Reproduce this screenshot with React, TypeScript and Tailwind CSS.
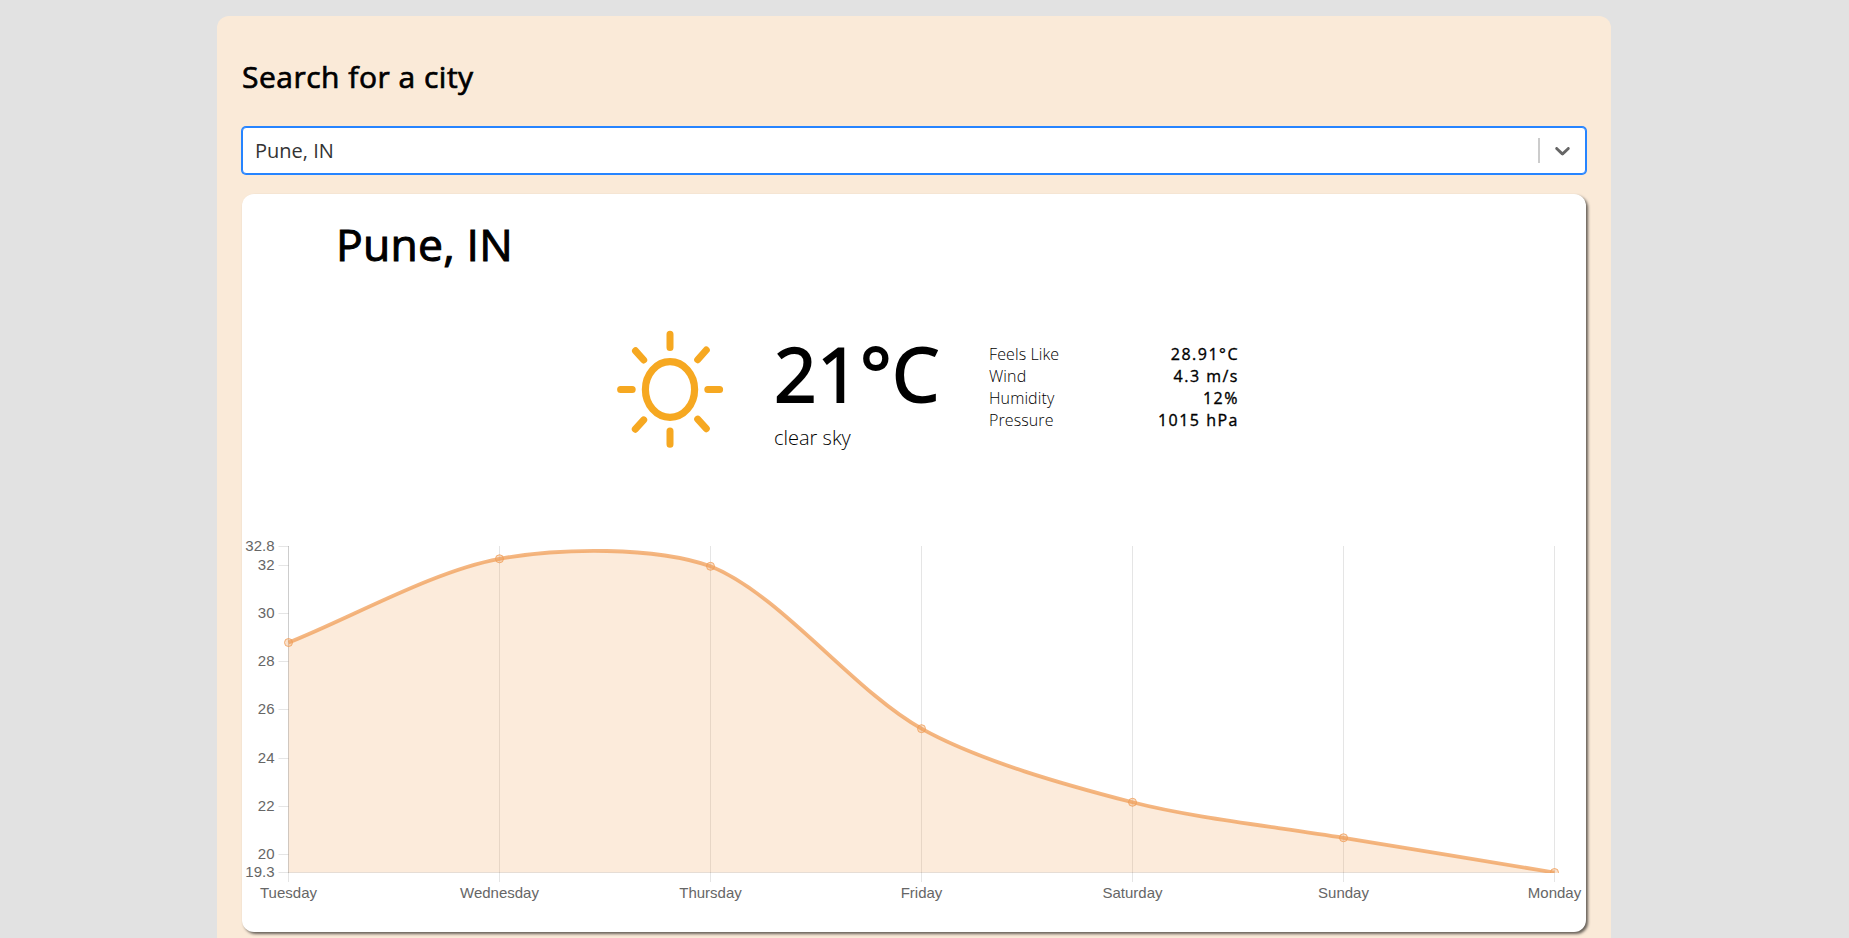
import React from 'react';

type Point = { x: number; y: number };

const AREA = { left: 46.5, right: 1312.5, top: 28.5, bottom: 354.5 };
const DAYS = ['Tuesday', 'Wednesday', 'Thursday', 'Friday', 'Saturday', 'Sunday', 'Monday'];
const TEMPS = [28.79, 32.26, 31.95, 25.22, 22.17, 20.7, 19.26];
const TICKS = [
  { label: '32.8', value: 32.77 },
  { label: '32', value: 32 },
  { label: '30', value: 30 },
  { label: '28', value: 28 },
  { label: '26', value: 26 },
  { label: '24', value: 24 },
  { label: '22', value: 22 },
  { label: '20', value: 20 },
  { label: '19.3', value: 19.26 },
];
const STATS = [
  ['Feels Like', '28.91°C'],
  ['Wind', '4.3 m/s'],
  ['Humidity', '12%'],
  ['Pressure', '1015 hPa'],
];
const TENSION = 0.3;

const xAt = (i: number) => AREA.left + ((AREA.right - AREA.left) * i) / (DAYS.length - 1);
const yAt = (v: number) => AREA.top + ((32.77 - v) / (32.77 - 19.26)) * (AREA.bottom - AREA.top);
const clampY = (y: number) => Math.min(AREA.bottom, Math.max(AREA.top, y));
const crisp = (v: number) => Math.floor(v) + 0.5;

function controls(prev: Point, cur: Point, next: Point) {
  const a = Math.hypot(cur.x - prev.x, cur.y - prev.y);
  const b = Math.hypot(next.x - cur.x, next.y - cur.y);
  const fa = (TENSION * a) / (a + b);
  const fb = (TENSION * b) / (a + b);
  const dx = next.x - prev.x;
  const dy = next.y - prev.y;
  return {
    before: { x: cur.x - fa * dx, y: clampY(cur.y - fa * dy) },
    after: { x: cur.x + fb * dx, y: clampY(cur.y + fb * dy) },
  };
}

function Chart() {
  const pts = TEMPS.map((t, i) => ({ x: xAt(i), y: yAt(t) }));
  const cps = pts.map((p, i) => controls(pts[i - 1] ?? p, p, pts[i + 1] ?? p));
  const line = pts
    .map((p, i) =>
      i === 0
        ? `M${p.x} ${p.y}`
        : `C${cps[i - 1].after.x} ${cps[i - 1].after.y} ${cps[i].before.x} ${cps[i].before.y} ${p.x} ${p.y}`,
    )
    .join(' ');
  return (
    <svg width="1344" height="400" viewBox="0 0 1344 400" className="block font-['Liberation_Sans',Arial,sans-serif] text-[15px]">
      <defs>
        <clipPath id="plot">
          <rect x="40" y="20" width="1282" height="335" />
        </clipPath>
      </defs>
      {DAYS.map((d, i) => (
        <g key={d}>
          <line x1={crisp(xAt(i))} x2={crisp(xAt(i))} y1="28" y2="364" stroke="#000" strokeOpacity="0.1" />
          <text x={xAt(i)} y="380" textAnchor="middle" fill="#666">{d}</text>
        </g>
      ))}
      {TICKS.map((t) => (
        <g key={t.label}>
          <line x1="36.5" x2="46.5" y1={crisp(yAt(t.value))} y2={crisp(yAt(t.value))} stroke="#000" strokeOpacity="0.1" />
          <text x="32.5" y={yAt(t.value) + 4.5} textAnchor="end" fill="#666">{t.label}</text>
        </g>
      ))}
      <line x1="46.5" x2="46.5" y1="28" y2="355" stroke="#000" strokeOpacity="0.1" />
      <line x1="46.5" x2="1312.5" y1="354.5" y2="354.5" stroke="#000" strokeOpacity="0.1" />
      <path d={`${line} L${AREA.right} ${AREA.bottom} L${AREA.left} ${AREA.bottom} Z`} fill="rgba(238,153,76,0.2)" />
      <g clipPath="url(#plot)">
        <path d={line} fill="none" stroke="rgba(240,157,87,0.75)" strokeWidth="3.8" />
        {pts.map((p) => (
          <circle key={p.x} cx={p.x} cy={p.y} r="4" fill="rgba(240,157,87,0.3)" stroke="rgba(240,157,87,0.8)" />
        ))}
      </g>
    </svg>
  );
}

function Sun() {
  return (
    <svg width="112" height="124" viewBox="0 0 112 124" fill="none" stroke="#f6a821" strokeLinecap="round" className="block">
      <ellipse cx="56" cy="61.5" rx="24.6" ry="27.8" strokeWidth="7.2" />
      <path strokeWidth="7" d="M56 6.3v13.2M56 103v13.2M6.6 61.5H18.2M93.8 61.5h11.8M21.5 22.8l8.2 9.2M92.3 22l-8.6 9.7M21.3 101.2l8.4-9.3M92.3 100.7l-8.6-9.6" />
    </svg>
  );
}

export default function App() {
  return (
    <div className="flex h-[938px] justify-center overflow-hidden bg-[#e2e2e2] pt-4 pr-[21px] font-['Open_Sans',sans-serif] text-black">
      <main className="h-[1000px] w-[1394px] shrink-0 rounded-xl bg-[#faead8] px-[25px] pt-[41px]">
        <h1 className="text-[30px] leading-[40px] tracking-[0.5px] [-webkit-text-stroke:0.7px_#000]">Search for a city</h1>
        <div className="mt-[30px] flex h-[47px] items-center rounded-[4px] border border-[#2684ff] bg-white pl-[12px] shadow-[0_0_0_1px_#2684ff]">
          <span className="flex-1 text-[20px] leading-[28px] text-[#333]">Pune, IN</span>
          <span className="h-[25px] w-0.5 bg-[#ccc]" />
          <span className="flex w-[45px] justify-center text-[#666]">
            <svg width="25" height="25" viewBox="0 0 20 20" fill="currentColor">
              <path d="M4.516 7.548c0.436-0.446 1.043-0.481 1.576 0l3.908 3.747 3.908-3.747c0.533-0.481 1.141-0.446 1.574 0 0.436 0.445 0.408 1.197 0 1.615-0.406 0.418-4.695 4.502-4.695 4.502-0.217 0.223-0.502 0.335-0.787 0.335s-0.57-0.112-0.789-0.335c0 0-4.287-4.084-4.695-4.502s-0.436-1.17 0-1.615z" />
            </svg>
          </span>
        </div>
        <section className="mt-5 h-[738px] rounded-xl bg-white pt-[17px] shadow-[2px_2px_3px_rgba(0,0,0,0.6)]">
          <h2 className="pl-[94px] text-[44.5px] leading-[65px] tracking-[0.2px] [-webkit-text-stroke:1px_#000]">Pune, IN</h2>
          <div className="mt-[52px] flex h-[124px] items-start pl-[372px]">
            <Sun />
            <div className="ml-[48px] w-[215px]">
              <p className="text-[75px] leading-[90px] [-webkit-text-stroke:1.8px_#000]">21°C</p>
              <p className="mt-[6px] text-[20px] leading-[28px] font-light">clear sky</p>
            </div>
            <dl className="w-[250px] pt-[15px] text-[16px] leading-[22px]">
              {STATS.map(([k, v]) => (
                <div key={k} className="flex justify-between">
                  <dt className="font-light tracking-[0.1px]">{k}</dt>
                  <dd className="tracking-[1.5px] [-webkit-text-stroke:0.35px_#000]">{v}</dd>
                </div>
              ))}
            </dl>
          </div>
          <div className="mt-[66px]">
            <Chart />
          </div>
        </section>
      </main>
    </div>
  );
}
